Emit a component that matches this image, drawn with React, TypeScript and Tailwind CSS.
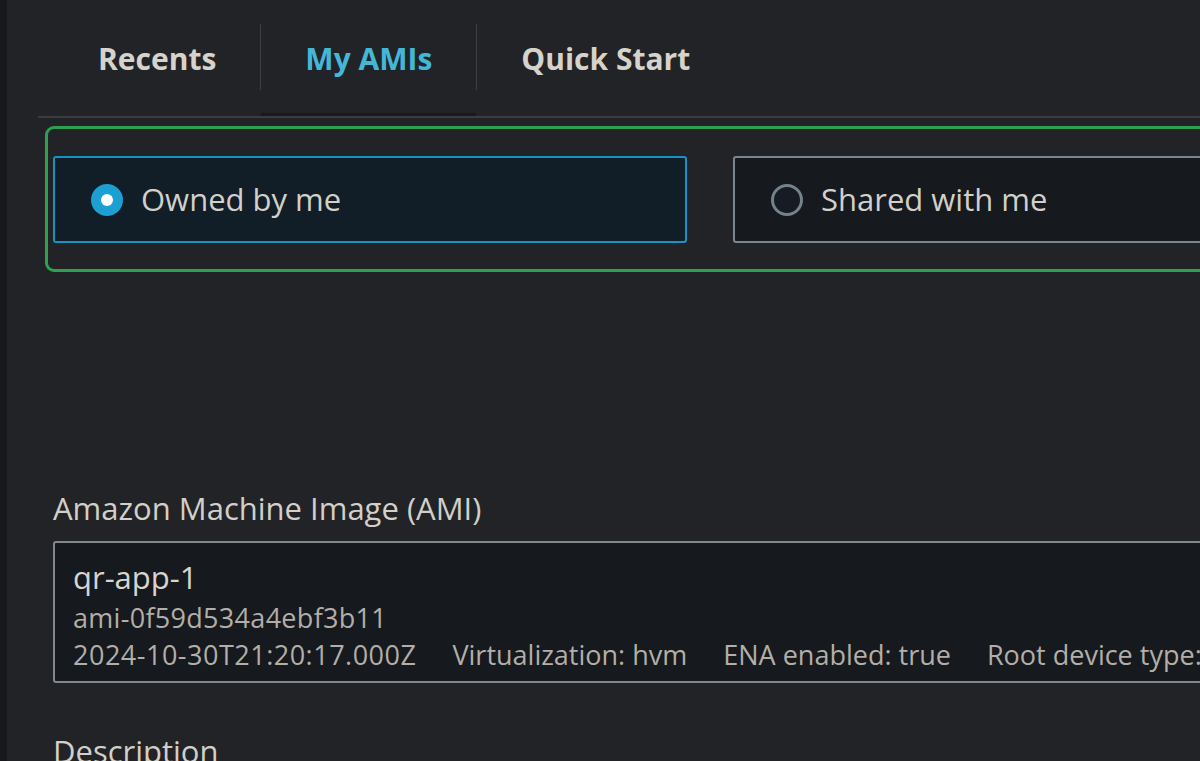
const font = "font-['Open_Sans',_'Noto_Sans',_sans-serif]";

function Tab({ label, active }: { label: string; active?: boolean }) {
  return (
    <div className="relative flex h-[116px] items-center px-[44px]">
      <span className={`text-[30px] font-bold ${active ? 'text-[#44b7d9]' : 'text-[#d6d2cc]'}`}>
        {label}
      </span>
      {active && <div className="absolute bottom-0 left-0 right-0 h-[3px] bg-[#18191c]" />}
    </div>
  );
}

function Divider() {
  return <div className="mt-[24px] h-[66px] w-px bg-[#3d3f44]" />;
}

function RadioTile({ label, checked }: { label: string; checked?: boolean }) {
  return (
    <div
      className={`flex h-[87px] w-[634px] shrink-0 items-center gap-[18px] rounded-[3px] pl-[36px] ${
        checked
          ? 'border-2 border-[#1593c7] bg-[#111d27]'
          : 'border-2 border-[#7a868f] bg-[#16191e]'
      }`}
    >
      {checked ? (
        <div className="flex h-[32px] w-[32px] items-center justify-center rounded-full bg-[#1c9fd1]">
          <div className="h-[12px] w-[12px] rounded-full bg-white" />
        </div>
      ) : (
        <div className="h-[32px] w-[32px] rounded-full border-[3px] border-[#74828a] bg-[#161b24]" />
      )}
      <span className="text-[31px] font-medium text-[#d3cfc9]">{label}</span>
    </div>
  );
}

export default function App() {
  return (
    <div className={`flex h-[761px] w-full overflow-hidden bg-[#222326] ${font}`}>
      <div className="w-[7px] shrink-0 bg-[#16181b]" />
      <div className="flex w-[1400px] shrink-0 flex-col pl-[31px]">
        {/* tabs */}
        <div className="flex border-b-2 border-[#3a3c41] pl-[16px]">
          <Tab label="Recents" />
          <Divider />
          <Tab label="My AMIs" active />
          <Divider />
          <Tab label="Quick Start" />
        </div>

        {/* highlighted tile group */}
        <div className="mt-[8px] ml-[7px] flex gap-[46px] rounded-[9px] border-[3px] border-[#2da052] pt-[27px] pb-[26px] pl-[5px]">
          <RadioTile label="Owned by me" checked />
          <RadioTile label="Shared with me" />
        </div>

        {/* AMI field */}
        <div className="mt-[218px] pl-[15px]">
          <div className="text-[31px] font-medium leading-[36px] text-[#d3cfc9]">
            Amazon Machine Image (AMI)
          </div>
          <div className="mt-[15px] h-[142px] rounded-[3px] border-2 border-[#80878d] bg-[#16191e] pl-[18px] pt-[16px]">
            <div className="text-[31px] font-medium leading-[36px] text-[#d8d4ce]">qr-app-1</div>
            <div className="mt-[4px] text-[27px] leading-[38px] tracking-[0.3px] text-[#b3aea7]">
              ami-0f59d534a4ebf3b11
            </div>
            <div className="flex gap-[36px] whitespace-nowrap text-[27px] leading-[36px] text-[#b3aea7]">
              <span className="tracking-[0.5px]">2024-10-30T21:20:17.000Z</span>
              <span>Virtualization: hvm</span>
              <span>ENA enabled: true</span>
              <span>Root device type: ebs</span>
            </div>
          </div>
          <div className="mt-[50px] text-[31px] font-medium leading-[36px] text-[#d3cfc9]">Description</div>
        </div>
      </div>
    </div>
  );
}
